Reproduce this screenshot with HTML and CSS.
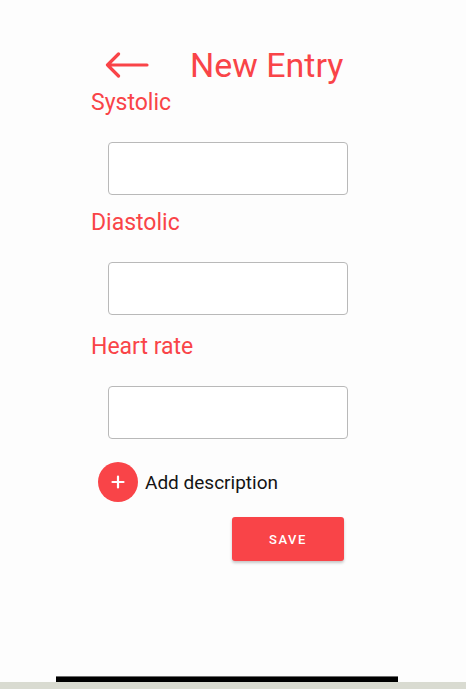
FILE: index.html
```html
<!DOCTYPE html>
<html>
<head>
<meta charset="utf-8">
<link rel="stylesheet" href="styles.css">
</head>
<body>
<div class="screen">
  <div class="content">
    <header class="header">
      <svg class="back" width="44" height="26" viewBox="0 0 44 26">
        <path d="M42 13H2.5M13.5 2L2.5 13L13.5 24" fill="none" stroke="#f94448" stroke-width="3.2" stroke-linecap="round" stroke-linejoin="round"/>
      </svg>
      <h1 class="title">New Entry</h1>
    </header>
    <div class="field">
      <label class="label">Systolic</label>
      <input class="input" type="text">
    </div>
    <div class="field field-2">
      <label class="label">Diastolic</label>
      <input class="input" type="text">
    </div>
    <div class="field field-3">
      <label class="label">Heart rate</label>
      <input class="input" type="text">
    </div>
    <div class="add-row">
      <span class="add-btn"><svg width="16" height="16" viewBox="0 0 16 16"><path d="M8 2.5V13.5M2.5 8H13.5" stroke="#fff" stroke-width="2.2" stroke-linecap="round"/></svg></span>
      <span class="add-text">Add description</span>
    </div>
    <div class="actions">
      <button class="save">SAVE</button>
    </div>
  </div>
  <div class="nav">
    <div class="nav-bar"></div>
  </div>
  <div class="strip"></div>
</div>
</body>
</html>
```
FILE: styles.css
```css
html, body {
  margin: 0;
  padding: 0;
  background: #fdfdfd;
}
.screen {
  width: 466px;
  height: 689px;
  display: flex;
  flex-direction: column;
  font-family: Roboto, "Noto Sans", sans-serif;
}
.content {
  flex: 1;
  padding: 45px 0 0 91px;
  display: flex;
  flex-direction: column;
  align-items: flex-start;
}
.header {
  display: flex;
  align-items: center;
  height: 40px;
  margin-left: 14px;
}
.back {
  display: block;
  margin-right: 41px;
}
.title {
  margin: 0;
  font-size: 34px;
  font-weight: 400;
  line-height: 40px;
  color: #f94448;
}
.field {
  display: flex;
  flex-direction: column;
  align-items: flex-start;
  margin-top: 5px;
}
.field-2 {
  margin-top: 15px;
}
.field-3 {
  margin-top: 19px;
}
.label {
  font-size: 23px;
  line-height: 26px;
  color: #f94448;
}
.input {
  box-sizing: border-box;
  margin: 26px 0 0 17px;
  width: 240px;
  height: 53px;
  border: 1px solid #b9b9b9;
  border-radius: 4px;
  background: #fff;
  outline: none;
  padding: 0 10px;
  font: inherit;
}
.add-row {
  display: flex;
  align-items: center;
  margin: 23px 0 0 7px;
}
.add-btn {
  width: 40px;
  height: 40px;
  border-radius: 50%;
  background: #f94448;
  display: flex;
  align-items: center;
  justify-content: center;
}
.add-text {
  margin-left: 7px;
  font-size: 19px;
  color: #141414;
}
.actions {
  margin: 15px 0 0 141px;
}
.save {
  width: 112px;
  height: 44px;
  border: none;
  border-radius: 3px;
  background: #f94448;
  color: #fff;
  font-family: Roboto, sans-serif;
  font-size: 13px;
  font-weight: 500;
  letter-spacing: 1.6px;
  box-shadow: 0 2px 3px rgba(0,0,0,0.22);
}
.nav {
  height: 6px;
  display: flex;
  padding-left: 56px;
}
.nav-bar {
  width: 342px;
  height: 6px;
  background: #000;
  border-top: 1px solid #6e6e6e;
  box-sizing: border-box;
}
.strip {
  height: 7px;
  background: #d9dbd1;
}
```
